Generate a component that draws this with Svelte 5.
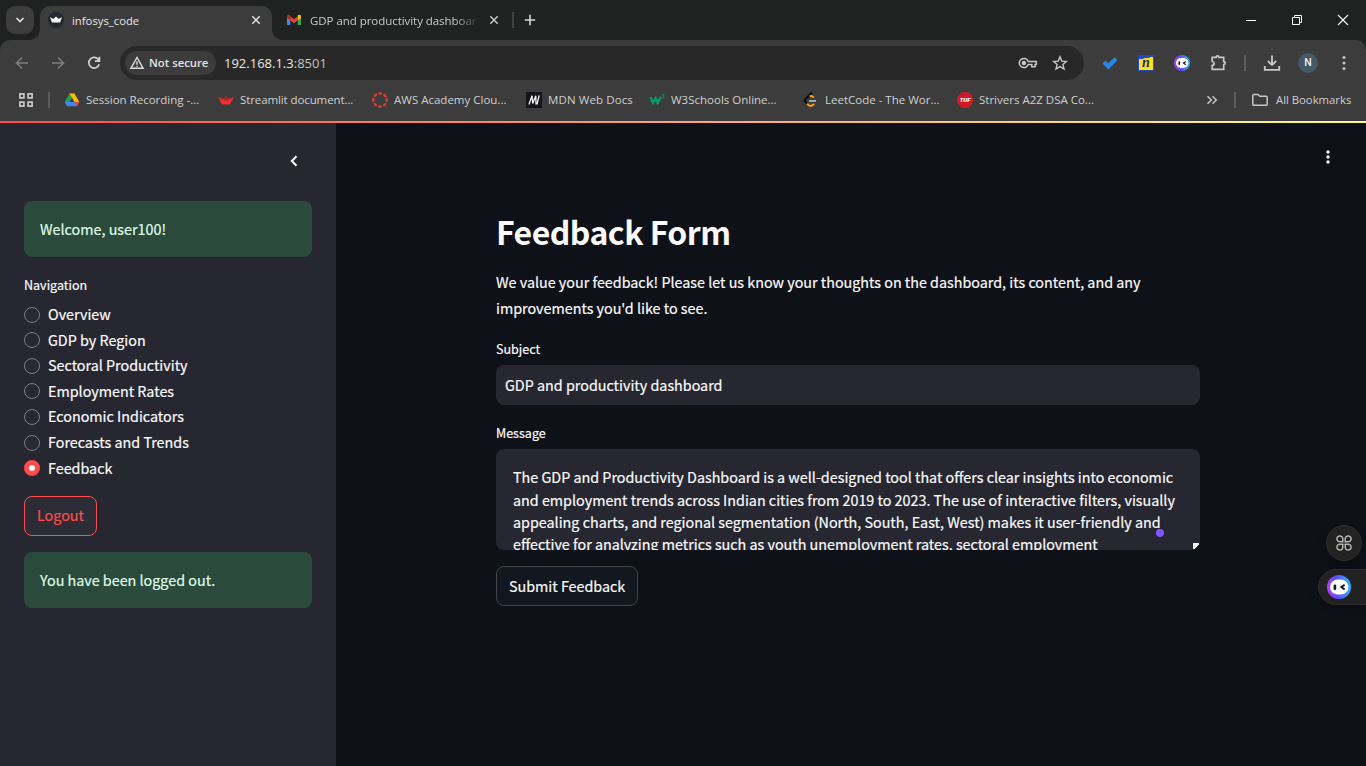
<script>
  const bookmarks = [
    { icon: 'drive', text: 'Session Recording -...', width: 154 },
    { icon: 'streamlit', text: 'Streamlit document...', width: 154 },
    { icon: 'canvas', text: 'AWS Academy Clou...', width: 154 },
    { icon: 'mdn', text: 'MDN Web Docs', width: 123 },
    { icon: 'w3', text: 'W3Schools Online...', width: 154 },
    { icon: 'leet', text: 'LeetCode - The Wor...', width: 154 },
    { icon: 'tuf', text: 'Strivers A2Z DSA Co...', width: 154 }
  ];
  const pages = [
    'Overview',
    'GDP by Region',
    'Sectoral Productivity',
    'Employment Rates',
    'Economic Indicators',
    'Forecasts and Trends',
    'Feedback'
  ];
  const current = 'Feedback';
  const message = [
    'The GDP and Productivity Dashboard is a well-designed tool that offers clear insights into economic',
    'and employment trends across Indian cities from 2019 to 2023. The use of interactive filters, visually',
    'appealing charts, and regional segmentation (North, South, East, West) makes it user-friendly and',
    'effective for analyzing metrics such as youth unemployment rates, sectoral employment'
  ];
</script>

{#snippet bot(size, id)}
  <svg width={size} height={size} viewBox="0 0 24 24">
    <defs>
      <linearGradient id={id} x1="0" y1="0.6" x2="1" y2="0.5">
        <stop offset="0" stop-color="#b63cf5" />
        <stop offset="0.4" stop-color="#5a4bff" />
        <stop offset="1" stop-color="#2fb4f5" />
      </linearGradient>
    </defs>
    <circle cx="12" cy="12" r="12" fill="url(#{id})" />
    <rect x="3" y="4.5" width="18.5" height="15" rx="7.5" fill="#fff" />
    <rect x="6.6" y="9.4" width="2.6" height="5.6" rx="1.2" fill="#14141c" />
    <path d="M17.6 9.8l-3.2 2.3 3.2 2.5" fill="none" stroke="#14141c" stroke-width="1.9" />
  </svg>
{/snippet}

<div class="window">
  <header>
    <div class="tabs">
      <div class="search-tabs">
        <svg width="10" height="10" viewBox="0 0 10 10"><path d="M1.5 3l3.5 3.6L8.500 3" fill="none" stroke="#e3e3e3" stroke-width="1.7" /></svg>
      </div>
      <div class="tab active">
        <svg width="16" height="16" viewBox="0 0 16 16">
          <circle cx="8" cy="8" r="8" fill="#262730" />
          <path d="M2 5.300l3.300 1.500L8 4.600l2.700 2.200L14 5.300l-2 5.200H4z" fill="#f2f2f2" />
        </svg>
        <span class="tab-title">infosys_code</span>
        <svg class="close" width="10" height="10" viewBox="0 0 10 10"><path d="M1.300 1.300l7.400 7.400M8.700 1.300L1.300 8.700" stroke="#e3e3e3" stroke-width="1.5" /></svg>
      </div>
      <div class="tab idle">
        <svg width="16" height="16" viewBox="0 0 16 16">
          <path d="M1 4v9h3.200V6.500z" fill="#4285f4" />
          <path d="M15 4v9h-3.200V6.500z" fill="#34a853" />
          <path d="M4.200 4.300L8 7.300l3.800-3v4L8 11.200 4.200 8.300z" fill="#ea4335" />
          <path d="M1 4.200c0-1.600 1.600-1.900 2.500-1.200l.7.600v4.700L1 6z" fill="#c5221f" />
          <path d="M15 4.200c0-1.600-1.600-1.900-2.500-1.200l-.7.600v4.700L15 6z" fill="#fbbc04" />
        </svg>
        <span class="tab-title">GDP and productivity dashboar</span>
        <svg class="close" width="10" height="10" viewBox="0 0 10 10"><path d="M1.300 1.300l7.400 7.400M8.700 1.300L1.300 8.700" stroke="#c7c7c7" stroke-width="1.5" /></svg>
      </div>
      <i class="tab-rule"></i>
      <svg class="new-tab" width="12" height="12" viewBox="0 0 12 12"><path d="M6 .8v10.400M.8 6h10.400" stroke="#d6d6d6" stroke-width="1.600" /></svg>
      <div class="controls">
        <span><svg width="12" height="12" viewBox="0 0 12 12"><path d="M1 6.500h10" stroke="#fff" /></svg></span>
        <span><svg width="12" height="12" viewBox="0 0 12 12" fill="none" stroke="#fff"><path d="M1.500 3.500h7v7h-7zM3.500 3V1.500h7v7H9" /></svg></span>
        <span><svg width="12" height="12" viewBox="0 0 12 12"><path d="M1 1l10 10M11 1L1 11" stroke="#fff" stroke-width="1.100" /></svg></span>
      </div>
    </div>

    <div class="bars">
      <div class="toolbar">
        <span class="slot"><svg width="16" height="16" viewBox="0 0 16 16" fill="none" stroke="#7d7d7d" stroke-width="1.600"><path d="M14 8H3M8 2.500L2.500 8 8 13.500" /></svg></span>
        <span class="slot"><svg width="16" height="16" viewBox="0 0 16 16" fill="none" stroke="#7d7d7d" stroke-width="1.600"><path d="M2 8h11M8 2.500L13.500 8 8 13.500" /></svg></span>
        <span class="slot"><svg width="16" height="16" viewBox="0 0 16 16" fill="none" stroke="#d2d2d2" stroke-width="1.700"><path d="M12.700 5A5.300 5.300 0 1 0 13.200 9.300M13.400 1.800v4.400H9" /></svg></span>
        <div class="omnibox">
          <div class="chip">
            <svg width="16" height="16" viewBox="0 0 16 16" fill="none" stroke="#dcdcdc" stroke-width="1.400"><path d="M8 2.500L1.900 13.300h12.200zM8 6.300v3.500M8 10.700v1.300" /></svg>
            <span>Not secure</span>
          </div>
          <span class="url">192.168.1.3<b>:8501</b></span>
          <svg class="key" width="20" height="14" viewBox="0 0 20 14" fill="none" stroke="#c7c7c7" stroke-width="1.500">
            <path d="M10.200 5.400h8.100v3.200h-1.200v2.200h-3.300V8.600h-3.600a4.600 4.600 0 1 1 0-3.200z" />
            <circle cx="5.900" cy="7" r="1.500" fill="#c7c7c7" />
          </svg>
          <svg class="star" width="16" height="16" viewBox="0 0 16 16" fill="none" stroke="#c7c7c7" stroke-width="1.400"><path d="M8 1.900l1.800 4.200 4.600.4-3.500 3 1.100 4.500L8 11.600 4 14l1.100-4.500-3.500-3 4.600-.4z" /></svg>
        </div>
        <span class="slot first"><svg width="16" height="16" viewBox="0 0 16 16"><path d="M.5 8.500l3-3L6.300 8.300l6.300-6.100 2.900 2.900-9.200 9.300z" fill="#2486e8" /></svg></span>
        <span class="slot"><span class="note-ext">n</span></span>
        <span class="slot">{@render bot(16, 'bot-small')}</span>
        <span class="slot"><svg width="18" height="18" viewBox="0 0 18 18" fill="none" stroke="#c7c7c7" stroke-width="1.700"><path d="M3.200 3.400h4c.1-2 2.700-2 2.800 0h4.700v4.300c2 .1 2 2.700 0 2.800v4.900H3.200v-4c2.600-.3 2.600-3.500 0-3.900z" /></svg></span>
        <i class="rule tools"></i>
        <span class="slot"><svg width="18" height="18" viewBox="0 0 18 18" fill="none" stroke="#c7c7c7" stroke-width="1.800"><path d="M9 1.500v9.300M4.900 7L9 11l4.100-4M1.800 12v3.900h14.400V12" /></svg></span>
        <span class="slot"><span class="avatar">N</span></span>
        <span class="slot"><svg width="4" height="16" viewBox="0 0 4 16" fill="#c7c7c7"><circle cx="2" cy="2.500" r="1.500" /><circle cx="2" cy="8" r="1.500" /><circle cx="2" cy="13.500" r="1.500" /></svg></span>
      </div>

      <div class="bookmarks">
        <svg class="apps" width="14" height="14" viewBox="0 0 14 14" fill="none" stroke="#c7c7c7" stroke-width="1.700"><path d="M.9.900h4v4h-4zM9.100.900h4v4h-4zM.9 9.100h4v4h-4zM9.100 9.100h4v4h-4z" /></svg>
        <i class="rule"></i>
        <div class="marks">
          {#each bookmarks as mark}
            <div class="mark" style="width:{mark.width}px">
              <svg width="16" height="16" viewBox="0 0 16 16">
                {#if mark.icon === 'drive'}
                  <path d="M5.600 1.500h4.800L8 5.700 3.200 14 .7 10z" fill="#21a353" />
                  <path d="M5.600 1.500h4.800L15.300 10h-4.800z" fill="#fbbc04" />
                  <path d="M3.200 10h12.100l-2.400 4.200H3.200L.7 10z" fill="#4285f4" />
                  <path d="M10.500 10h4.800l-2.400 4.200z" fill="#ea4335" />
                {:else if mark.icon === 'streamlit'}
                  <path d="M.3 4.900L5.300 7 8 3.400 10.800 7l4.900-2.100L12.200 12q-.3.600-1 .6H4.800q-.7 0-1-.6z" fill="#ff2b2b" />
                  <path d="M5.300 7L8 3.400 10.800 7 8 8.700z" fill="#8f2a35" />
                  <path d="M.3 4.900l5 2.100L8 8.700l2.800-1.700 4.900-2.100-3.600 3.500L8 9.300 3.900 8.400z" fill="#c9303a" />
                {:else if mark.icon === 'canvas'}
                  <circle cx="8" cy="8" r="6.700" fill="none" stroke="#e63d2e" stroke-width="2.200" stroke-dasharray="3.600 1.660" stroke-dashoffset="1.800" />
                {:else if mark.icon === 'mdn'}
                  <path d="M0 0h16v16H0z" fill="#15141a" />
                  <path d="M2.900 12.500L6 3.800l.7 7.700L9.800 3.800l.2 8.700M13.200 3.500l-2.300 9" fill="none" stroke="#f4f4f4" stroke-width="1.300" />
                {:else if mark.icon === 'w3'}
                  <path d="M1.500 5.200l2.600 5.600 2.500-4.600 2.100 4.600 3.300-5.600" fill="none" stroke="#079c67" stroke-width="2.500" />
                  <path d="M13.200 2.700h2l-1.200 1.600c1.500 0 1.500 2-.7 1.700" fill="none" stroke="#079c67" stroke-width=".9" />
                {:else if mark.icon === 'leet'}
                  <path d="M9 .600L2.500 7c-1 1-1 2 0 3L4.500 12.100" fill="none" stroke="#080808" stroke-width="2" />
                  <path d="M6.800 4.400c1.400-1 2.500-.4 4 1.300M4.100 11.700c2.500 3.300 4.800 2.700 6.900.2" fill="none" stroke="#ffa116" stroke-width="2" />
                  <path d="M6 8.900h7" stroke="#b8b8b8" stroke-width="1.700" />
                {:else}
                  <circle cx="8" cy="8" r="8" fill="#d2182b" />
                  <text x="8" y="10.300" text-anchor="middle" class="badge">TUF</text>
                {/if}
              </svg>
              <span class={mark.icon}>{mark.text}</span>
            </div>
          {/each}
        </div>
        <svg class="more" width="12" height="10" viewBox="0 0 12 10" fill="none" stroke="#c7c7c7" stroke-width="1.500"><path d="M1.500 1.200L5.300 5 1.500 8.800M6.500 1.200L10.300 5 6.500 8.800" /></svg>
        <i class="rule"></i>
        <svg class="folder" width="16" height="14" viewBox="0 0 16 14" fill="none" stroke="#c7c7c7" stroke-width="1.500"><path d="M2 1.500h4l1.700 1.800H14c.7 0 1.200.4 1.200 1.100v6.800c0 .7-.5 1.100-1.200 1.100H2c-.7 0-1.200-.4-1.200-1.100V2.600c0-.7.5-1.100 1.200-1.100z" /></svg>
        <span class="all">All Bookmarks</span>
      </div>
    </div>
  </header>
  <div class="decoration"></div>

  <div class="app">
    <aside>
      <div class="collapse">
        <svg width="8" height="12" viewBox="0 0 8 12"><path d="M6.500 1.200L1.800 6l4.700 4.800" fill="none" stroke="#fff" stroke-width="2" /></svg>
      </div>
      <div class="alert">Welcome, user100!</div>
      <div class="label nav-label">Navigation</div>
      <div class="radios">
        {#each pages as page}
          <div class="radio">
            <i class:on={page === current}></i>
            <span>{page}</span>
          </div>
        {/each}
      </div>
      <div class="button logout">Logout</div>
      <div class="alert">You have been logged out.</div>
    </aside>

    <main>
      <div class="column">
        <h1>Feedback Form</h1>
        <p>We value your feedback! Please let us know your thoughts on the dashboard, its content, and any<br />improvements you'd like to see.</p>
        <div class="label">Subject</div>
        <div class="input">GDP and productivity dashboard</div>
        <div class="label">Message</div>
        <div class="textarea">
          {#each message as line}<div class="line">{line}</div>{/each}
          <i class="dot"></i>
          <i class="grip"></i>
        </div>
        <div class="button">Submit Feedback</div>
      </div>
      <svg class="menu" width="6" height="16" viewBox="0 0 6 16" fill="#fafafa"><circle cx="3" cy="3" r="1.700" /><circle cx="3" cy="8" r="1.700" /><circle cx="3" cy="13" r="1.700" /></svg>
      <div class="float grid">
        <svg width="16" height="16" viewBox="0 0 16 16" fill="none" stroke="#b5b5b5" stroke-width="1.500">
          <path d="M6.800 6.800H3.900a2.950 2.950 0 1 1 2.900-2.900zM9.200 6.800V3.900a2.950 2.950 0 1 1 2.900 2.900zM6.800 9.200v2.900a2.950 2.950 0 1 1-2.900-2.900zM9.200 9.200h2.900a2.950 2.950 0 1 1-2.900 2.900z" />
        </svg>
      </div>
      <div class="float pill">{@render bot(24, 'bot-large')}</div>
    </main>
  </div>
</div>

<style>
  :global(body) { margin: 0; background: #0e1117; }
  * { box-sizing: border-box; }
  svg { display: block; flex: none; }
  .window { width: 1366px; height: 766px; display: flex; flex-direction: column; overflow: hidden; font-family: 'Open Sans', sans-serif; font-size: 11.5px; }

  header { height: 121px; background: #202221; flex: none; }
  .tabs { height: 40px; display: flex; align-items: center; padding-left: 6px; }
  .search-tabs { width: 28px; height: 28px; border-radius: 9px; background: #3c3c3c; display: grid; place-items: center; }
  .tab { display: flex; align-items: center; gap: 8px; height: 34px; }
  .tab-title { flex: 1; white-space: nowrap; overflow: hidden; line-height: 18px; padding-top: 2px; }
  .active { position: relative; margin: 6px 0 0 6px; width: 232px; padding: 0 11px 6px 8px; background: #3c3c3c; border-radius: 10px 10px 0 0; color: #e6e6e6; font-size: 11.300px; }
  .active::before, .active::after { content: ''; position: absolute; bottom: 0; width: 10px; height: 10px; }
  .active::before { left: -10px; background: radial-gradient(circle at 0 0, transparent 9.500px, #3c3c3c 10px); }
  .active::after { right: -10px; background: radial-gradient(circle at 100% 0, transparent 9.500px, #3c3c3c 10px); }
  .idle { width: 227px; padding-left: 14px; color: #c9c9c9; }
  .idle .tab-title { flex: none; width: 168px; margin-right: 3px; mask-image: linear-gradient(90deg, #000 145px, transparent 169px); letter-spacing: -.05px; }
  .tab-rule { width: 2px; height: 16px; margin-left: 13px; background: #414342; }
  .new-tab { margin-left: 10px; }
  .controls { margin-left: auto; display: flex; }
  .controls span { width: 46px; display: grid; place-items: center; }

  .bars { height: 81px; background: #3c3c3c; border-radius: 10px 10px 0 0; }
  .toolbar { height: 46px; display: flex; align-items: center; padding: 0 4px; }
  .slot { width: 36px; display: grid; place-items: center; }
  .first { margin-left: 8px; }
  .omnibox { flex: 1; height: 34px; margin-left: 8px; border-radius: 17px; background: #282828; display: flex; align-items: center; padding: 0 16px 0 5px; }
  .chip { width: 91px; height: 24px; border-radius: 12px; background: #3c3c3c; display: flex; align-items: center; gap: 4px; padding-left: 4px; font-weight: 600; font-size: 11.300px; color: #e3e3e3; white-space: nowrap; }
  .chip span { padding-bottom: 1px; }
  .url { margin-left: 8px; font-size: 13px; color: #e8e8e8; line-height: 20px; }
  .url b { font-weight: 400; color: #c4c4c4; }
  .key { margin-left: auto; }
  .star { margin-left: 14px; }
  .note-ext { width: 16px; height: 16px; background: linear-gradient(170deg, #2849b8 24%, #fbe31c 26%); border: 1px solid #2849b8; border-width: 0 1px 1px 1px; color: #1b2a63; font: italic 700 14px/16px 'Liberation Serif', serif; text-align: center; }
  .avatar { width: 20px; height: 20px; border-radius: 50%; background: #455a64; color: #f1f1f1; font: 500 10.500px/20px Roboto, sans-serif; text-align: center; }
  .rule { width: 2px; height: 16px; background: #5c5c5c; flex: none; }
  .tools { margin: 0 8px; }

  .bookmarks { height: 28px; display: flex; align-items: center; padding: 0 15px 0 19px; color: #d0d0d0; }
  .apps { margin-right: 15px; }
  .marks { flex: 1; display: flex; padding-left: 14px; }
  .mark { display: flex; align-items: center; gap: 6px; white-space: nowrap; flex: none; line-height: 16px; }
  .streamlit { letter-spacing: -.1px; }
  .mdn { letter-spacing: .1px; }
  .badge { font: italic 900 6px Roboto, sans-serif; fill: #fff; }
  .more { margin-right: 16px; }
  .folder { margin: 0 8px 0 16px; }
  .all { width: 75px; font-size: 11.300px; white-space: nowrap; padding-bottom: 2px; }

  .decoration { height: 2px; flex: none; background: linear-gradient(90deg, #ff4b4b, #fffd80); }
  .app { flex: 1; display: flex; font-family: 'Noto Sans CJK SC', sans-serif; font-size: 14.330px; color: #fafafa; -webkit-text-stroke: .2px; }
  aside { width: 336px; background: #262730; padding: 0 24px; flex: none; }
  .collapse { height: 78px; padding: 32px 14px 0 0; display: flex; justify-content: flex-end; }
  .alert { height: 56px; padding: 0 16px; border-radius: 8px; background: #2b4a3b; color: #dffde9; line-height: 56px; }
  .label { font-size: 12.540px; line-height: 20px; height: 20px; }
  .nav-label { margin-top: 18px; }
  .radios { margin-top: 6.800px; }
  .radio { display: flex; align-items: center; gap: 8px; height: 25.600px; line-height: 23px; }
  .radio span { padding-bottom: 2px; }
  .radio i { width: 16px; height: 16px; border-radius: 50%; border: 1px solid #7c7d85; }
  .radio i.on { border: 5px solid #ff4b4b; background: #fafafa; }
  .button { width: max-content; height: 40px; padding: 0 12px; border: 1px solid #41444c; border-radius: 8px; background: #131720; line-height: 38px; }
  .logout { margin: 15px 0 16px; border-color: #ff4b4b; color: #ff4b4b; background: #2b2c36; line-height: 36px; }

  main { position: relative; flex: 1; background: #0e1117; }
  .column { width: 704px; margin-left: 160px; padding-top: 85px; }
  h1 { margin: 0; font-size: 32px; line-height: 46px; font-weight: 700; letter-spacing: -0.530px; -webkit-text-stroke: 0; }
  p { margin: 15px 0 18px; line-height: 26px; white-space: nowrap; }
  .input { height: 40px; margin: 6px 0 18px; padding-left: 9px; border-radius: 8px; background: #262730; line-height: 40px; }
  .textarea { position: relative; height: 101px; margin: 6px 0 16px; padding: 17.200px 17px 0; border-radius: 8px; background: #262730; overflow: hidden; }
  .line { height: 22.400px; line-height: 22.400px; white-space: nowrap; }
  .dot { position: absolute; left: 660px; top: 80px; width: 8px; height: 8px; border-radius: 50%; background: #7b57ff; }
  .grip { position: absolute; right: 1px; bottom: 1px; width: 6px; height: 6px; background: linear-gradient(135deg, #fff 60%, transparent 60%); }
  .menu { position: absolute; right: 35px; top: 26px; }
  .float { position: absolute; background: #222; border: 1px solid #2e2e2e; height: 36px; box-shadow: 0 2px 8px #0005; }
  .grid { right: 4px; top: 402px; width: 36px; border-radius: 50%; display: grid; place-items: center; }
  .pill { right: -1px; top: 446px; width: 49px; border-radius: 18px 0 0 18px; padding: 5px 8px; }
</style>
